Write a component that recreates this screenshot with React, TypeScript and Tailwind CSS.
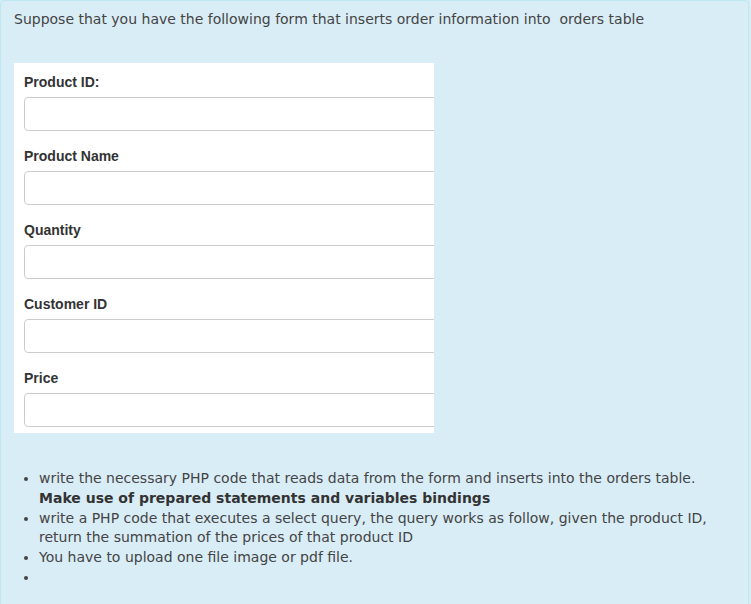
import React from 'react';

const fields = ['Product ID:', 'Product Name', 'Quantity', 'Customer ID', 'Price'];

export default function App() {
  return (
    <div className="w-[751px] h-[604px] bg-[#d9edf7] overflow-hidden">
      <div
        className="w-[749px] h-[610px] border border-[#bce8f1] rounded-[4px] pt-[8px] pl-[13px] text-[14px] leading-[20px] text-[#444]"
        style={{ fontFamily: '"DejaVu Sans", Verdana, sans-serif' }}
      >
        <p>Suppose that you have the following form that inserts order information into&nbsp; orders table</p>

        {/* Form card */}
        <div
          className="mt-[34px] w-[420px] bg-white overflow-hidden pt-[10px] pb-[6px] pl-[10px]"
          style={{ fontFamily: '"Liberation Sans", Arial, sans-serif' }}
        >
          {fields.map((f, i) => (
            <div key={f} className={i > 0 ? 'mt-[16px]' : ''}>
              <label className="block text-[14px] leading-[18px] font-bold text-[#333]">{f}</label>
              <input
                type="text"
                className="mt-[6px] block w-[440px] h-[34px] border border-[#ccc] rounded-[4px] bg-white"
              />
            </div>
          ))}
        </div>

        <ul className="mt-[36px] list-disc pl-[25px] pr-[30px] leading-[19.8px]">
          <li>
            write the necessary PHP code that reads data from the form and inserts into the orders table.
            <br />
            <strong className="text-[#333]">Make use of prepared statements and variables bindings</strong>
          </li>
          <li>
            write a PHP code that executes a select query, the query works as follow, given the product ID, return the
            summation of the prices of that product ID
          </li>
          <li>You have to upload one file image or pdf file.</li>
          <li>&nbsp;</li>
        </ul>
      </div>
    </div>
  );
}
